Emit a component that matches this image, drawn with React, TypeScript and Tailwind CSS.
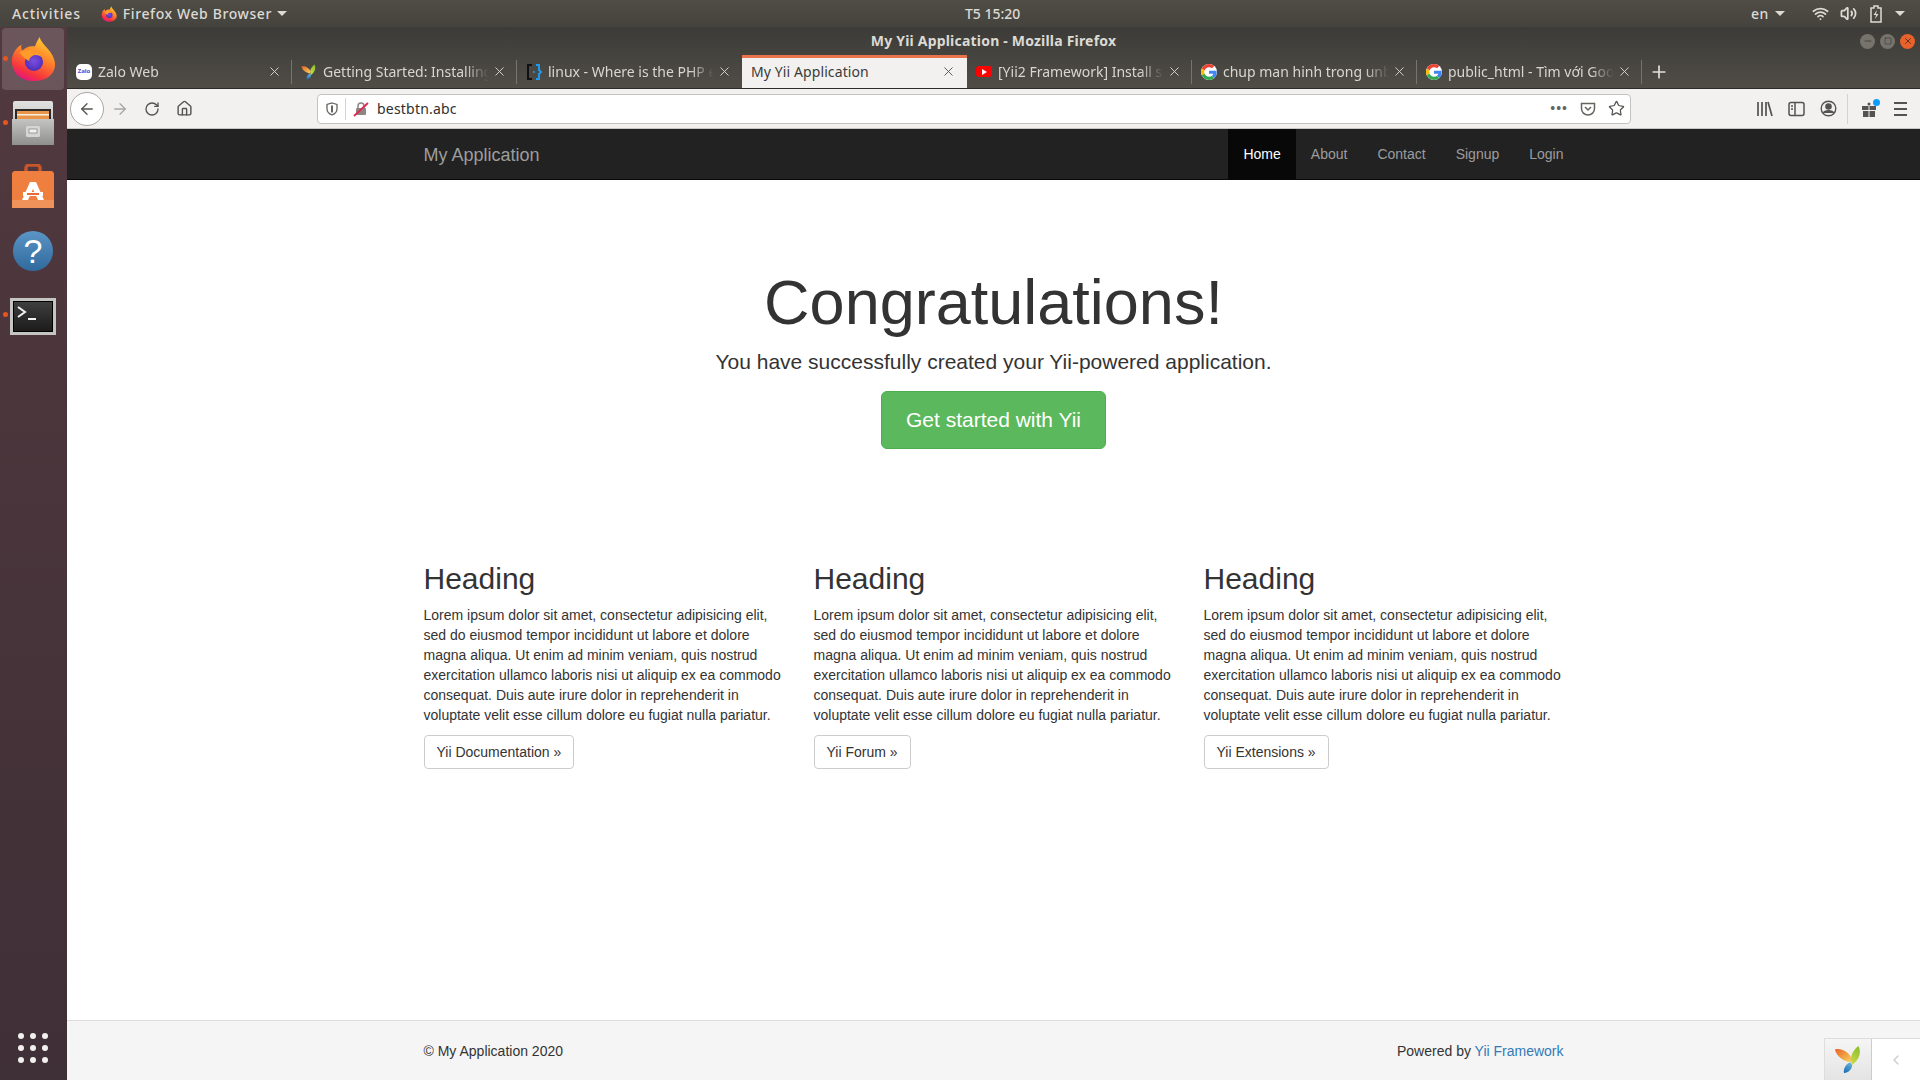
import { ArrowLeft, ArrowRight, ChevronLeft, Home, Minus, Plus, RotateCw, Square, Star, Volume2, Wifi, X } from 'lucide-react'

const LOREM =
  'Lorem ipsum dolor sit amet, consectetur adipisicing elit, sed do eiusmod tempor incididunt ut labore et dolore magna aliqua. Ut enim ad minim veniam, quis nostrud exercitation ullamco laboris nisi ut aliquip ex ea commodo consequat. Duis aute irure dolor in reprehenderit in voluptate velit esse cillum dolore eu fugiat nulla pariatur.'

const columns = ['Yii Documentation »', 'Yii Forum »', 'Yii Extensions »']

const tabs = [
  { title: 'Zalo Web', icon: 'zalo' },
  { title: 'Getting Started: Installing', icon: 'yii' },
  { title: 'linux - Where is the PHP exe', icon: 'code' },
  { title: 'My Yii Application', icon: null, active: true },
  { title: '[Yii2 Framework] Install source', icon: 'youtube' },
  { title: 'chup man hinh trong unbuntu', icon: 'google' },
  { title: 'public_html - Tìm với Google', icon: 'google' },
]

function FirefoxLogo({ size, id }: { size: number; id: string }) {
  return (
    <svg width={size} height={size} viewBox="0 0 48 48">
      <defs>
        <linearGradient id={`${id}-body`} x1="0.75" y1="0.05" x2="0.3" y2="1">
          <stop offset="0" stopColor="#ffcb2e" />
          <stop offset="0.45" stopColor="#ff7a2b" />
          <stop offset="0.8" stopColor="#f5333f" />
          <stop offset="1" stopColor="#e31587" />
        </linearGradient>
        <radialGradient id={`${id}-core`} cx="0.5" cy="0.45" r="0.6">
          <stop offset="0" stopColor="#7b4fe0" />
          <stop offset="1" stopColor="#4a2bb5" />
        </radialGradient>
      </defs>
      <path
        d="M31 1c1 5 5 8 9 13 5 6 7 11 7 16 0 10-9 17-22 17C11 47 2 38 2 26 2 19 6 12 12 9c-1 3 0 5 1 6 3-3 8-5 13-4 1-3 3-7 5-10z"
        fill={`url(#${id}-body)`}
      />
      <circle cx="25" cy="27" r="9.500" fill={`url(#${id}-core)`} />
      <path d="M10 17c5-3 11-3 15-1 4 1 7 3 8 6-3-2-7-3-10-1-2 1-3 3-3 5-3-1-7-4-10-9z" fill="#ff9a2b" />
    </svg>
  )
}

function YiiLogo({ size }: { size: number }) {
  return (
    <svg width={size} height={size} viewBox="0 0 32 32">
      <defs>
        <linearGradient id="yii-orange" x1="0" y1="0" x2="1" y2="1">
          <stop offset="0" stopColor="#e8632a" />
          <stop offset="1" stopColor="#f8d65a" />
        </linearGradient>
        <linearGradient id="yii-green" x1="0.7" y1="0" x2="0.3" y2="1">
          <stop offset="0" stopColor="#8fbf2c" />
          <stop offset="1" stopColor="#c8d94a" />
        </linearGradient>
        <linearGradient id="yii-blue" x1="0.3" y1="1" x2="0.7" y2="0">
          <stop offset="0" stopColor="#1b6fb8" />
          <stop offset="1" stopColor="#6bb6d8" />
        </linearGradient>
      </defs>
      <path d="M1 5c7-2 14 2 19 10l-2 4C12 18 3 14 1 5z" fill="url(#yii-orange)" />
      <path d="M27 1c3 6 2 14-7 21-3-7-1-15 7-21z" fill="url(#yii-green)" />
      <path d="M18 19l2 3c0 4-3 8-9 9-1-5 2-10 7-12z" fill="url(#yii-blue)" />
    </svg>
  )
}

function GoogleIcon() {
  return (
    <svg width="16" height="16" viewBox="0 0 48 48">
      <path fill="#fff" d="M24 0a24 24 0 1 0 0 48 24 24 0 0 0 0-48z" />
      <path fill="#EA4335" d="M24 9.5c3.5 0 6.6 1.2 9.1 3.6l6.8-6.8C35.8 2.4 30.4 0 24 0 14.6 0 6.5 5.4 2.6 13.2l7.9 6.2C12.4 13.7 17.7 9.5 24 9.5z" />
      <path fill="#4285F4" d="M47 24.5c0-1.6-.2-3.1-.4-4.5H24v9h12.9c-.6 3-2.2 5.5-4.7 7.2l7.7 6C44.4 38 47 31.800 47 24.500z" />
      <path fill="#FBBC05" d="M10.500 28.600A14.500 14.500 0 0 1 9.700 24c0-1.600.3-3.200.8-4.600l-7.900-6.200A24 24 0 0 0 0 24c0 3.900.9 7.500 2.600 10.800l7.900-6.200z" />
      <path fill="#34A853" d="M24 48c6.500 0 11.900-2.100 15.900-5.800l-7.700-6c-2.200 1.500-4.900 2.300-8.200 2.300-6.300 0-11.600-4.200-13.500-9.900l-7.900 6.200C6.500 42.600 14.600 48 24 48z" />
    </svg>
  )
}

function TabIcon({ icon }: { icon: string | null }) {
  if (icon === 'zalo')
    return (
      <span className="flex h-4 w-4 items-center justify-center rounded-[5px] bg-white text-[6px] font-bold text-[#5a3fd8]">
        Zalo
      </span>
    )
  if (icon === 'yii') return <YiiLogo size={16} />
  if (icon === 'code')
    return (
      <svg width="16" height="18" viewBox="0 0 16 18" fill="none" strokeWidth="2">
        <path d="M6 2H2v14h4" stroke="#111" />
        <path d="M10 2h3v5l2 2-2 2v5h-3" stroke="#1e9bf0" />
        <circle cx="8" cy="9" r="1" fill="#1e9bf0" />
      </svg>
    )
  if (icon === 'youtube')
    return (
      <span className="flex h-[11px] w-4 items-center justify-center rounded-[3px] bg-[#f00]">
        <span className="h-0 w-0 border-y-[3px] border-l-[5px] border-y-transparent border-l-white" />
      </span>
    )
  if (icon === 'google') return <GoogleIcon />
  return null
}

function Tab({ title, icon, active }: { title: string; icon: string | null; active?: boolean }) {
  if (active) {
    return (
      <div className="flex h-[33px] w-[225px] items-center border-t-[3px] border-t-[#e9734a] bg-[#f2f1ef] pr-[11px] pb-[3px] pl-[9px] text-[#3b3b38]">
        <span className="flex-1 whitespace-nowrap tracking-[0.1px]">{title}</span>
        <X size={15} strokeWidth={1.5} className="text-[#55534f]" />
      </div>
    )
  }
  return (
    <div className="flex h-[33px] w-[225px] items-center pr-[10px] pl-[9px] text-[#d8d6d0]">
      {icon && (
        <span className="mr-[6px] flex w-4 shrink-0 justify-center">
          <TabIcon icon={icon} />
        </span>
      )}
      <span className="flex-1 overflow-hidden whitespace-nowrap [mask-image:linear-gradient(to_left,transparent,black_24px)]">
        {title}
      </span>
      <X size={15} strokeWidth={1.5} className="ml-[3px] shrink-0 text-[#d8d6d0]" />
    </div>
  )
}

function TopBar() {
  const caret = 'h-0 w-0 border-x-[5px] border-t-[5px] border-x-transparent border-t-[#dcdad4]'
  return (
    <div className="flex h-[27px] shrink-0 items-center bg-gradient-to-b from-[#504d46] to-[#45433d] text-[14px] font-medium tracking-[0.6px] text-[#dcdad4]">
      <div className="flex w-[965px] shrink-0 items-center pl-3">
        <span className="tracking-[0.85px]">Activities</span>
        <span className="ml-[20px]">
          <FirefoxLogo size={16} id="top" />
        </span>
        <span className="ml-[6px]">Firefox Web Browser</span>
        <span className={`ml-[5px] ${caret}`} />
      </div>
      <span className="tracking-normal">T5 15:20</span>
      <span className="mr-[6px] ml-auto">en</span>
      <span className={caret} />
      <Wifi size={17} strokeWidth={2.5} className="ml-[27px]" />
      <Volume2 size={17} strokeWidth={2.5} className="ml-[11px]" />
      <svg width="14" height="18" viewBox="0 0 14 18" fill="none" className="ml-[12px]">
        <path d="M5 1h4v2h3v14H2V3h3z" stroke="#dcdad4" strokeWidth="1.500" />
        <path d="M8 5L4.500 10H7l-1 4 3.500-5H7z" fill="#dcdad4" />
      </svg>
      <span className={`mr-[15px] ml-[12px] ${caret}`} />
    </div>
  )
}

function Dock() {
  const dot = 'absolute left-[3px] h-[5px] w-[5px] rounded-full bg-[#e95420]'
  return (
    <div className="flex w-[67px] shrink-0 flex-col items-center bg-gradient-to-b from-[#51393f] to-[#3f2f36] pr-px">
      <div className="relative flex h-[64px] w-full items-center justify-center">
        <div className="flex h-[62px] w-[62px] items-center justify-center rounded-[4px] bg-white/15">
          <FirefoxLogo size={46} id="dock" />
        </div>
        <span className={`${dot} top-[29px]`} />
      </div>
      <div className="relative flex h-[64px] w-full items-center justify-center">
        <svg width="42" height="44" viewBox="0 0 42 44">
          <defs>
            <linearGradient id="cabinet-top" x1="0" y1="0" x2="0" y2="1">
              <stop offset="0" stopColor="#e2e2e0" />
              <stop offset="1" stopColor="#a5a5a3" />
            </linearGradient>
            <linearGradient id="cabinet-front" x1="0" y1="0" x2="0" y2="1">
              <stop offset="0" stopColor="#c4c4c2" />
              <stop offset="1" stopColor="#8f8f8d" />
            </linearGradient>
          </defs>
          <rect x="1" y="0" width="40" height="44" rx="2" fill="url(#cabinet-top)" />
          <rect x="3" y="8" width="36" height="12" fill="#2b2a28" />
          <rect x="5" y="10" width="32" height="9" fill="#e8954a" />
          <rect x="5" y="13" width="32" height="1.500" fill="#f6efe2" />
          <path d="M0 18h42v26H0z" fill="url(#cabinet-front)" />
          <rect x="14" y="25" width="14" height="11" rx="1.500" fill="#d6d6d4" />
          <rect x="17" y="28" width="8" height="4" fill="#f2f2f0" stroke="#555" strokeWidth="0.500" />
        </svg>
        <span className={`${dot} top-[29px]`} />
      </div>
      <div className="flex h-[64px] w-full items-center justify-center">
        <svg width="42" height="46" viewBox="0 0 42 46">
          <path d="M14 12V4a3 3 0 0 1 3-3h8a3 3 0 0 1 3 3v8" fill="none" stroke="#c8562a" strokeWidth="3.500" />
          <path d="M2 7h38l2 2v35H0V9z" fill="#ee7f3e" />
          <path d="M0 36h42v8H0z" fill="#f0935a" />
          <path d="M18 18h6l8 18h-6l-5-11-5 11h-6z" fill="#fff" />
          <rect x="11" y="28" width="20" height="4" fill="#fff" />
          <rect x="15" y="29" width="12" height="2" fill="#e8693a" />
        </svg>
      </div>
      <div className="flex h-[64px] w-full items-center justify-center">
        <div className="flex h-[40px] w-[40px] items-center justify-center rounded-full bg-gradient-to-b from-[#5b95c6] to-[#306a9c] font-['Liberation_Sans',sans-serif] text-[34px] leading-none text-white">
          ?
        </div>
      </div>
      <div className="relative flex h-[64px] w-full items-center justify-center pt-[2px]">
        <div className="flex h-[37px] w-[46px] border-[3px] border-[#c4c4c2]">
          <div className="flex-1 border border-black bg-gradient-to-b from-[#3f3f3f] to-[#1c1c1c] p-[2px]">
            <svg width="32" height="22" viewBox="0 0 32 22" fill="none" stroke="#f2f2f2" strokeWidth="2">
              <path d="M2 3l7 5-7 5" />
              <path d="M12 15h8" />
            </svg>
          </div>
        </div>
        <span className={`${dot} top-[29px]`} />
      </div>
      <div className="mt-auto mb-[17px] grid grid-cols-3 gap-[6px]">
        {Array.from({ length: 9 }).map((_, i) => (
          <span key={i} className="h-[6px] w-[6px] rounded-full bg-[#f2f0ee]" />
        ))}
      </div>
    </div>
  )
}

function TitleBar() {
  return (
    <div className="shrink-0 bg-gradient-to-b from-[#3c3b37] to-[#504d47] font-['Noto_Sans',sans-serif] text-[14px]">
      <div className="flex h-[28px] items-center">
        <span className="flex-1 pb-[2px] pl-[60px] text-center font-bold tracking-[0.2px] text-[#dcdad4]">My Yii Application - Mozilla Firefox</span>
        <div className="mr-[5px] flex gap-[5px]">
          <span className="flex h-[15px] w-[15px] items-center justify-center rounded-full bg-[#76736d] text-[#3c3b37]">
            <Minus size={10} strokeWidth={2} />
          </span>
          <span className="flex h-[15px] w-[15px] items-center justify-center rounded-full bg-[#76736d] text-[#3c3b37]">
            <Square size={8} strokeWidth={2} />
          </span>
          <span className="flex h-[15px] w-[15px] items-center justify-center rounded-full bg-[#e9622b] text-[#4a2a18]">
            <X size={10} strokeWidth={2} />
          </span>
        </div>
      </div>
      <div className="flex h-[33px] items-end">
        {tabs.map((t, i) => (
          <div key={t.title} className="relative">
            <Tab title={t.title} icon={t.icon} active={t.active} />
            {!t.active && !tabs[i + 1]?.active && (
              <span className="absolute top-[5px] right-0 h-[24px] w-px bg-[#77746d]" />
            )}
          </div>
        ))}
        <div className="flex h-[33px] w-[34px] items-center justify-center text-[#e2e0da]">
          <Plus size={20} strokeWidth={2} />
        </div>
      </div>
    </div>
  )
}

function Toolbar() {
  const iconColor = 'text-[#55534f]'
  return (
    <div className="flex h-[41px] shrink-0 items-center border-t border-t-[#2c2b28] border-b border-b-[#c9c7c3] bg-[#f2f1ef] pl-[3px] font-['Noto_Sans',sans-serif]">
      <div className="flex h-[34px] w-[34px] items-center justify-center rounded-full border border-[#a9a7a3] bg-white">
        <ArrowLeft size={18} strokeWidth={1.75} className={iconColor} />
      </div>
      <ArrowRight size={18} strokeWidth={1.75} className="ml-[7px] text-[#a8a6a2]" />
      <RotateCw size={16} strokeWidth={2} className={`ml-[15px] ${iconColor}`} />
      <Home size={17} strokeWidth={2} className={`ml-[16px] ${iconColor}`} />
      <div className="ml-[124px] flex h-[30px] w-[1314px] items-center rounded-[4px] border border-[#c5c3bf] bg-white text-[14px] text-[#2f2f2d]">
        <svg width="14" height="14" viewBox="0 0 14 14" fill="none" className="ml-[7px]">
          <path d="M7 1l5 1.500V7c0 3-2.500 5-5 6-2.500-1-5-3-5-6V2.500z" stroke="#66645f" strokeWidth="1.300" />
          <path d="M7 3.500v7" stroke="#66645f" strokeWidth="2" />
        </svg>
        <span className="ml-[6px] h-[22px] w-px bg-[#d5d3cf]" />
        <svg width="16" height="16" viewBox="0 0 16 16" className="ml-[7px]">
          <rect x="3" y="7" width="10" height="7" rx="1" fill="#8a8884" />
          <path d="M5 7V5a3 3 0 0 1 6 0v2" fill="none" stroke="#8a8884" strokeWidth="1.500" />
          <path d="M1 15L15 2" stroke="#e22850" strokeWidth="1.800" />
        </svg>
        <span className="ml-[8px] flex-1 tracking-[0.2px]">bestbtn.abc</span>
        <span className="mr-[12px] text-[13px] leading-none font-bold tracking-[1px] text-[#66645f]">•••</span>
        <svg width="16" height="16" viewBox="0 0 16 16" fill="none" className="mr-[12px]">
          <path d="M1.500 2.500h13v5a6.500 6.500 0 0 1-13 0z" stroke="#66645f" strokeWidth="1.500" />
          <path d="M5 6l3 3 3-3" stroke="#66645f" strokeWidth="1.500" />
        </svg>
        <Star size={17} strokeWidth={1.75} className={`mr-[5px] ${iconColor}`} />
      </div>
      <div className="ml-[125px] flex items-center gap-[15px] text-[#55534f]">
        <svg width="17" height="16" viewBox="0 0 17 16" fill="none" stroke="currentColor" strokeWidth="1.700">
          <path d="M2 1v14M6 1v14M10 1v14M12 1l4 14" />
        </svg>
        <svg width="17" height="16" viewBox="0 0 17 16" fill="none" stroke="currentColor" strokeWidth="1.500">
          <rect x="1" y="1.500" width="15" height="13" rx="2" />
          <path d="M7 1.500v13" />
          <path d="M3 5h2M3 8h2" />
        </svg>
        <svg width="17" height="17" viewBox="0 0 17 17" fill="none" stroke="currentColor" strokeWidth="1.400">
          <circle cx="8.500" cy="8.500" r="7.300" />
          <circle cx="8.500" cy="6.500" r="2.600" fill="currentColor" />
          <path d="M3.500 13c1-3 9-3 10 0" fill="currentColor" />
        </svg>
      </div>
      <span className="ml-[10px] h-[30px] w-px bg-[#d5d3cf]" />
      <div className="relative ml-[13px]">
        <svg width="16" height="16" viewBox="0 0 16 16" fill="#55534f">
          <rect x="1" y="5" width="6.500" height="4" />
          <rect x="8.500" y="5" width="6.500" height="4" />
          <rect x="2" y="10" width="5.500" height="6" />
          <rect x="8.500" y="10" width="5.500" height="6" />
          <circle cx="8" cy="3" r="1.500" />
        </svg>
        <span className="absolute -top-[2px] -right-[3px] h-[7px] w-[7px] rounded-full bg-[#0a9dff]" />
      </div>
      <div className="ml-[17px] flex flex-col gap-[4px]">
        <span className="h-[2px] w-[13px] bg-[#55534f]" />
        <span className="h-[2px] w-[13px] bg-[#55534f]" />
        <span className="h-[2px] w-[13px] bg-[#55534f]" />
      </div>
    </div>
  )
}

function Navbar() {
  const links = ['Home', 'About', 'Contact', 'Signup', 'Login']
  return (
    <div className="flex h-[51px] shrink-0 justify-center border-b border-[#080808] bg-[#222]">
      <div className="flex w-[1170px] items-stretch justify-between">
        <a className="flex items-center pt-[1px] pl-[15px] text-[18px] text-[#9d9d9d]">My Application</a>
        <div className="flex">
          {links.map((l, i) => (
            <a
              key={l}
              className={`flex items-center px-[15px] text-[14px] ${i === 0 ? 'bg-[#080808] text-white' : 'text-[#9d9d9d]'}`}
            >
              {l}
            </a>
          ))}
        </div>
      </div>
    </div>
  )
}

function Page() {
  return (
    <div className="flex min-h-0 flex-1 flex-col bg-white font-['Liberation_Sans',Arial,sans-serif] text-[14px] leading-[20px] text-[#333]">
      <Navbar />
      <div className="mx-auto flex w-[1170px] flex-1 flex-col px-[15px]">
        <div className="flex flex-col items-center pt-[88px] text-center">
          <h1 className="text-[63px] leading-[69px]">Congratulations!</h1>
          <p className="mt-[10px] text-[21px] leading-[29px]">You have successfully created your Yii-powered application.</p>
          <a className="mt-[15px] rounded-[6px] border border-[#4cae4c] bg-[#5cb85c] px-[24px] py-[14px] text-[21px] leading-[28px] text-white">
            Get started with Yii
          </a>
        </div>
        <div className="mt-[113px] -mx-[15px] grid grid-cols-3">
          {columns.map((label) => (
            <div key={label} className="px-[15px]">
              <h2 className="text-[30px] leading-[33px]">Heading</h2>
              <p className="mt-[10px]">{LOREM}</p>
              <a className="mt-[10px] inline-block rounded-[4px] border border-[#ccc] bg-white px-[12px] py-[6px]">{label}</a>
            </div>
          ))}
        </div>
      </div>
      <div className="flex h-[60px] shrink-0 justify-center border-t border-[#ddd] bg-[#f5f5f5]">
        <div className="flex w-[1170px] justify-between px-[15px] pt-[20px]">
          <span>© My Application 2020</span>
          <span>
            Powered by <a className="text-[#337ab7]">Yii Framework</a>
          </span>
        </div>
      </div>
    </div>
  )
}

export default function App() {
  return (
    <div className="relative flex h-[1080px] w-[1920px] flex-col overflow-hidden font-['Noto_Sans',sans-serif]">
      <TopBar />
      <div className="flex min-h-0 flex-1">
        <Dock />
        <div className="flex min-w-0 flex-1 flex-col">
          <TitleBar />
          <Toolbar />
          <Page />
        </div>
      </div>
      {/* debug toolbar stub, sits over the footer */}
      <div className="absolute right-0 bottom-0 flex h-[42px] w-[96px] border-t border-l border-[#ddd] bg-white">
        <div className="flex w-[47px] items-center justify-center border-r border-[#ccc] bg-gradient-to-b from-[#f5f5f5] to-[#e4e4e4]">
          <YiiLogo size={29} />
        </div>
        <div className="flex flex-1 items-center justify-center text-[#ccc]">
          <ChevronLeft size={16} strokeWidth={2} />
        </div>
      </div>
    </div>
  )
}
